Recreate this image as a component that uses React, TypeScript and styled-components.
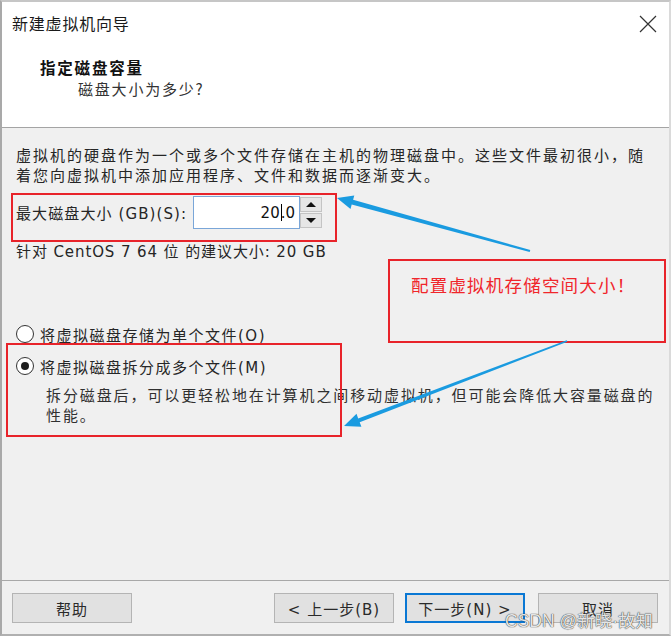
import React from "react";
import styled, { createGlobalStyle } from "styled-components";

const Global = createGlobalStyle`
  html, body { margin: 0; padding: 0; background: #ffffff; }
  body { font-family: "DejaVu Sans", "Noto Sans CJK SC", sans-serif; }
  * { box-sizing: border-box; }
`;

const CJK = `"Noto Sans CJK SC", "Noto Sans CJK JP", sans-serif`;
const UI = `"DejaVu Sans", "Noto Sans CJK SC", sans-serif`;

const Window = styled.div`
  position: relative;
  width: 671px;
  height: 636px;
  display: flex;
  flex-direction: column;
  border-top: 2px solid #c6c6c6;
  border-left: 2px solid #a9a9a9;
  border-right: 2px solid #dadada;
  border-bottom: 2px solid #b0b0b0;
  background: #f0f0f0;
  overflow: hidden;
`;

const TitleBar = styled.div`
  height: 42px;
  flex: none;
  display: flex;
  align-items: center;
  justify-content: space-between;
  padding: 0 12px 0 10px;
  background: #ffffff;
`;

const TitleText = styled.div`
  font-family: ${CJK};
  font-size: 16px;
  letter-spacing: 0.8px;
  color: #1a1a1a;
`;

const CloseIcon = styled.svg`
  width: 18px;
  height: 18px;
  margin-top: 2px;
`;

const Header = styled.div`
  height: 84px;
  flex: none;
  background: #ffffff;
  border-bottom: 1px solid #a4a4a4;
  padding: 12px 0 0 38px;
`;

const HeaderTitle = styled.div`
  font-family: ${CJK};
  font-weight: 700;
  font-size: 15.5px;
  letter-spacing: 1.8px;
  line-height: 22px;
  color: #111;
`;

const HeaderSub = styled.div`
  font-family: ${CJK};
  font-size: 15px;
  letter-spacing: 1.8px;
  line-height: 22px;
  margin-left: 38px;
  color: #333;
`;

const Body = styled.div`
  flex: 1;
  padding: 18px 0 0 14px;
  font-family: ${UI};
  font-size: 15px;
  color: #262626;
`;

const Para = styled.div`
  width: 640px;
  line-height: 20px;
  letter-spacing: 2px;
`;

const SizeRow = styled.div`
  margin-top: 10px;
  height: 33px;
  display: flex;
  align-items: center;
  letter-spacing: 1.1px;
`;

const SizeLabel = styled.span`
  width: 177px;
  flex: none;
`;

const NumberBox = styled.div`
  width: 107px;
  height: 33px;
  background: #ffffff;
  border: 1px solid #7aa6d8;
  display: flex;
  align-items: center;
  justify-content: flex-end;
  padding-right: 4px;
  font-size: 15px;
  letter-spacing: 0;
  color: #111;
`;

const Caret = styled.span`
  display: inline-block;
  width: 1px;
  height: 17px;
  background: #000;
  margin: 0 -1px 0 1px;
  vertical-align: middle;
`;

const Spinner = styled.div`
  width: 22px;
  height: 33px;
  display: flex;
  flex-direction: column;
  gap: 1px;
  padding: 1px 0;
`;

const SpinBtn = styled.div`
  flex: 1;
  background: #e6e6e6;
  border: 1px solid #c4c4c4;
  display: flex;
  align-items: center;
  justify-content: center;
`;

const Tri = styled.span<{ $up?: boolean }>`
  width: 0;
  height: 0;
  border-left: 5px solid transparent;
  border-right: 5px solid transparent;
  ${(p) => (p.$up ? "border-bottom: 5px solid #111;" : "border-top: 5px solid #111;")}
`;

const Suggest = styled.div`
  margin-top: 13px;
  line-height: 20px;
  letter-spacing: 0.9px;
`;

const RadioRow = styled.label<{ $gap: number }>`
  margin-top: ${(p) => p.$gap}px;
  height: 20px;
  display: flex;
  align-items: center;
  gap: 6px;
  letter-spacing: 1.5px;
  color: #262626;
`;

const RadioCircle = styled.span<{ $checked?: boolean }>`
  width: 18px;
  height: 18px;
  border-radius: 50%;
  border: 1px solid #333;
  background: #fff;
  display: flex;
  align-items: center;
  justify-content: center;
  flex: none;
  &::after {
    content: "";
    width: 8px;
    height: 8px;
    border-radius: 50%;
    background: ${(p) => (p.$checked ? "#1e1e1e" : "transparent")};
  }
`;

const Desc = styled.div`
  margin: 10px 0 0 30px;
  width: 620px;
  line-height: 20px;
  letter-spacing: 1.9px;
  color: #303030;
`;

const Footer = styled.div`
  flex: none;
  height: 54px;
  border-top: 1px solid #a8a8a8;
  display: flex;
  align-items: flex-start;
  padding: 12px 11px 0 10px;
`;

const Button = styled.div<{ $primary?: boolean; $ml?: number }>`
  width: 120px;
  height: 30px;
  margin-left: ${(p) => p.$ml ?? 0}px;
  background: #e1e1e1;
  border: ${(p) => (p.$primary ? "2px solid #0a78d4" : "1px solid #b4b4b4")};
  display: flex;
  align-items: center;
  justify-content: center;
  font-family: ${UI};
  font-size: 15px;
  letter-spacing: 1px;
  color: #2a2a2a;
`;

const Highlight = styled.div<{ $x: number; $y: number; $w: number; $h: number }>`
  position: absolute;
  left: ${(p) => p.$x}px;
  top: ${(p) => p.$y}px;
  width: ${(p) => p.$w}px;
  height: ${(p) => p.$h}px;
  border: 2px solid #e8232a;
  pointer-events: none;
`;

const Note = styled(Highlight)`
  padding: 12px 0 0 21px;
  font-family: ${CJK};
  font-size: 17.5px;
  letter-spacing: 1.2px;
  color: #f0262b;
  line-height: 24px;
`;

const ArrowLayer = styled.svg`
  position: absolute;
  left: 0;
  top: 0;
  width: 671px;
  height: 636px;
  pointer-events: none;
`;

const Watermark = styled.div`
  position: absolute;
  left: 503px;
  top: 605px;
  font-family: "Liberation Sans", "Noto Sans CJK SC", sans-serif;
  font-size: 17.5px;
  color: rgba(255, 255, 255, 0.9);
  text-shadow: 0 0 1px rgba(40, 40, 40, 1), 0 0 1px rgba(40, 40, 40, 0.8);
  pointer-events: none;
`;

export default function App() {
  return (
    <>
      <Global />
      <Window>
        <TitleBar>
          <TitleText>新建虚拟机向导</TitleText>
          <CloseIcon viewBox="0 0 18 18">
            <path d="M1 1 L17 17 M17 1 L1 17" stroke="#333" strokeWidth="1.2" fill="none" />
          </CloseIcon>
        </TitleBar>
        <Header>
          <HeaderTitle>指定磁盘容量</HeaderTitle>
          <HeaderSub>磁盘大小为多少?</HeaderSub>
        </Header>
        <Body>
          <Para>
            虚拟机的硬盘作为一个或多个文件存储在主机的物理磁盘中。这些文件最初很小，随着您向虚拟机中添加应用程序、文件和数据而逐渐变大。
          </Para>
          <SizeRow>
            <SizeLabel>最大磁盘大小 (GB)(S):</SizeLabel>
            <NumberBox>
              20<Caret />.0
            </NumberBox>
            <Spinner>
              <SpinBtn>
                <Tri $up />
              </SpinBtn>
              <SpinBtn>
                <Tri />
              </SpinBtn>
            </Spinner>
          </SizeRow>
          <Suggest>针对 CentOS 7 64 位 的建议大小: 20 GB</Suggest>
          <RadioRow $gap={62}>
            <RadioCircle />
            将虚拟磁盘存储为单个文件(O)
          </RadioRow>
          <RadioRow $gap={12}>
            <RadioCircle $checked />
            将虚拟磁盘拆分成多个文件(M)
          </RadioRow>
          <Desc>拆分磁盘后，可以更轻松地在计算机之间移动虚拟机，但可能会降低大容量磁盘的性能。</Desc>
        </Body>
        <Footer>
          <Button>帮助</Button>
          <Button $ml={142}>&lt; 上一步(B)</Button>
          <Button $ml={11} $primary>
            下一步(N) &gt;
          </Button>
          <Button $ml={13}>取消</Button>
        </Footer>

        <Highlight $x={9} $y={191} $w={326} $h={49} />
        <Highlight $x={4} $y={341} $w={336} $h={94} />
        <Note $x={386} $y={257} $w={278} $h={84}>
          配置虚拟机存储空间大小！
        </Note>
        <ArrowLayer viewBox="0 0 671 636">
          <g transform="translate(-2 -2)">
            <polygon
              fill="#1a9be0"
              points="530.3,250.0 353.1,199.8 354.3,195.4 337,198 350.5,209.0 351.7,204.6 529.7,252.0"
            />
            <polygon
              fill="#1a9be0"
              points="566.7,340.3 358.2,418.4 356.5,413.8 344,426 361.4,426.8 359.7,422.2 567.3,341.7"
            />
          </g>
        </ArrowLayer>
        <Watermark>CSDN @新晓·故知</Watermark>
      </Window>
    </>
  );
}
